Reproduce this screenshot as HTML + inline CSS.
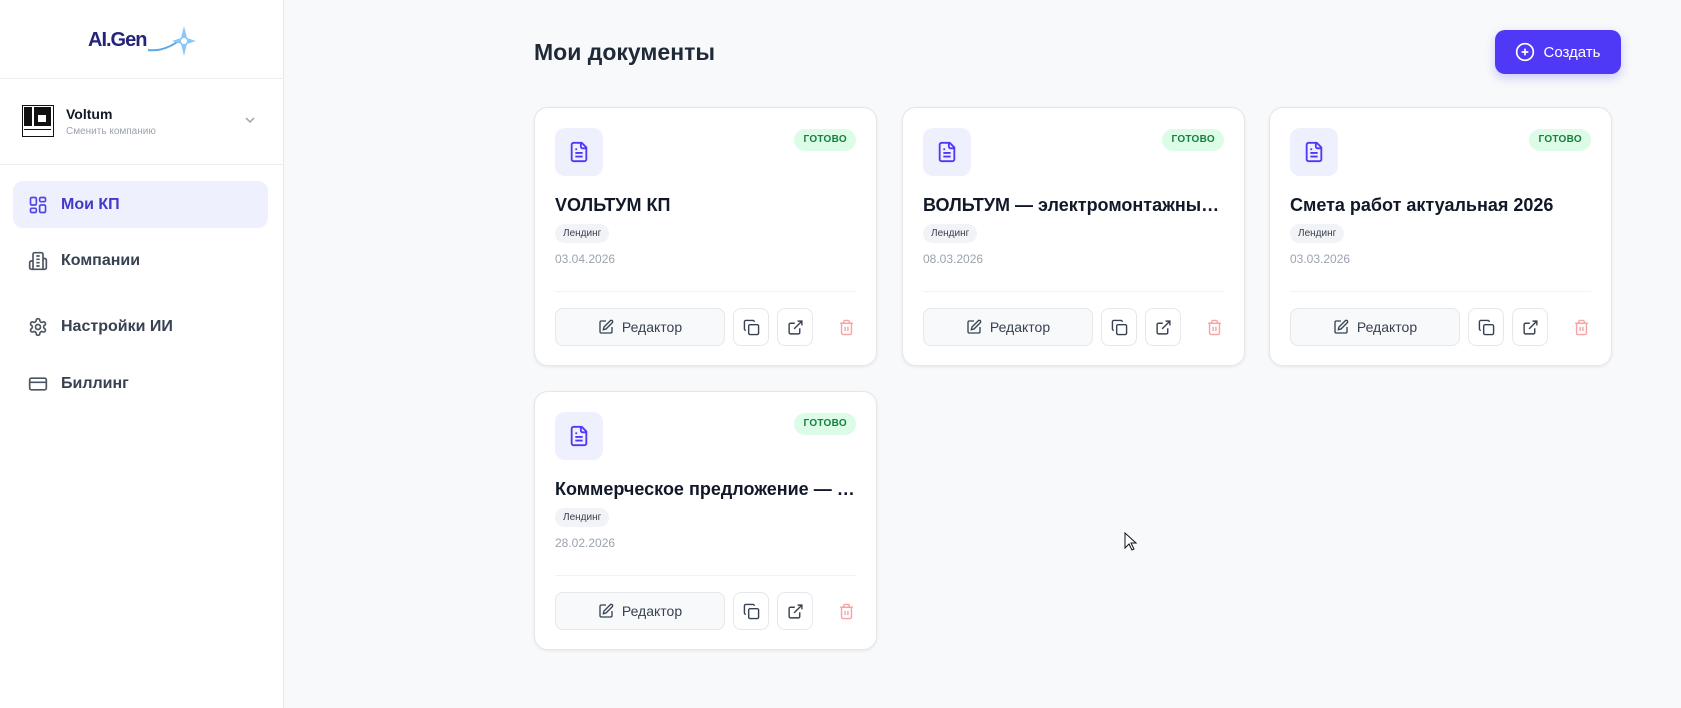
<!DOCTYPE html>
<html><head><meta charset="utf-8"><style>
*{box-sizing:border-box;margin:0;padding:0}
body{width:1681px;height:708px;overflow:hidden;background:#f8f9fb;font-family:"Liberation Sans","DejaVu Sans",sans-serif;color:#111827;position:relative}
.side{position:absolute;left:0;top:0;width:284px;height:708px;background:#fff;border-right:1px solid #e5e7eb}
.hr{position:absolute;left:0;width:284px;height:1px;background:#eceef1}
.nav{position:absolute;left:13px;width:255px;height:47px;border-radius:10px;display:flex;align-items:center;padding-left:15px;font-size:16px;font-weight:bold;color:#374151}
.nav svg{width:20px;height:20px;margin-right:13px}
.card{position:absolute;width:343px;height:259px;background:#fff;border:1px solid #e5e7eb;border-radius:14px;box-shadow:0 1px 3px rgba(0,0,0,.08)}
.ic{position:absolute;left:20px;top:20px;width:48px;height:48px;border-radius:10px;background:#eef0fd;display:flex;align-items:center;justify-content:center}
.badge{position:absolute;right:20px;top:21px;height:22px;padding:0 9px;border-radius:11px;background:#dcfce7;color:#15803d;font-size:10px;font-weight:bold;line-height:22px;letter-spacing:.3px}
.title{position:absolute;left:20px;top:87px;width:305px;font-size:18px;font-weight:bold;white-space:nowrap;overflow:hidden;text-overflow:ellipsis;color:#111827}
.tag{position:absolute;left:20px;top:116px;height:19px;padding:0 8px;border-radius:10px;background:#f1f3f6;font-size:10px;color:#374151;line-height:19px}
.date{position:absolute;left:20px;top:144px;font-size:12px;color:#9ca3af}
.div{position:absolute;left:20px;right:20px;top:183px;height:1px;background:#f1f2f4}
.ed{position:absolute;left:20px;top:200px;width:170px;height:38px;border:1px solid #e5e7eb;border-radius:8px;background:#f8f9fb;display:flex;align-items:center;justify-content:center;font-size:14px;color:#374151}
.ed svg{margin-right:8px}
.sq{position:absolute;top:200px;width:36px;height:38px;border:1px solid #e5e7eb;border-radius:8px;background:#fff;display:flex;align-items:center;justify-content:center}
.tr{position:absolute;top:200px;left:293px;width:36px;height:38px;display:flex;align-items:center;justify-content:center}
</style></head><body>
<div class="side">
 <div style="position:absolute;left:88px;top:29px;font-size:20px;font-weight:bold;color:#24257a;letter-spacing:-1px">AI.Gen</div>
 <svg style="position:absolute;left:140px;top:24px" width="56" height="34" viewBox="0 0 56 34"><path d="M8 26 Q24 28 40 16" stroke="#5aa8e8" stroke-width="2" fill="none"/><path d="M44 2 L47 14 L56 17 L47 20 L44 32 L41 20 L32 17 L41 14 Z" fill="#8cc8f5"/><circle cx="44" cy="17" r="3" fill="#fff"/></svg>
 <div class="hr" style="top:78px"></div>
 <div style="position:absolute;left:22px;top:105px;width:32px;height:32px;border:1.5px solid #111;background:#fff"><div style="position:absolute;left:1px;top:1px;width:8px;height:19px;background:#111"></div><div style="position:absolute;left:11px;top:1px;width:17px;height:19px;background:#111"></div><div style="position:absolute;left:15px;top:9px;width:8px;height:7px;background:#fff"></div><div style="position:absolute;left:1px;top:23px;width:27px;height:1px;background:#111"></div></div>
 <div style="position:absolute;left:66px;top:106px;font-size:14px;font-weight:bold">Voltum</div>
 <div style="position:absolute;left:66px;top:126px;font-size:10px;color:#9ca3af">Сменить компанию</div>
 <svg style="position:absolute;left:244px;top:116px" width="12" height="8" viewBox="0 0 12 8"><path d="M2 2l4 4 4-4" stroke="#9ca3af" stroke-width="1.5" fill="none"/></svg>
 <div class="hr" style="top:164px"></div>
 <div class="nav" style="top:181px;background:#eef0fd;color:#4338ca"><svg viewBox="0 0 24 24" fill="none" stroke="#4f46e5" stroke-width="2"><rect x="3" y="3" width="7" height="9" rx="1.5"/><rect x="14" y="3" width="7" height="5" rx="1.5"/><rect x="14" y="12" width="7" height="9" rx="1.5"/><rect x="3" y="16" width="7" height="5" rx="1.5"/></svg>Мои КП</div>
 <div class="nav" style="top:237px"><svg viewBox="0 0 24 24" fill="none" stroke="#4b5563" stroke-width="2"><path d="M6 22V4a2 2 0 0 1 2-2h8a2 2 0 0 1 2 2v18Z"/><path d="M6 12H4a2 2 0 0 0-2 2v6a2 2 0 0 0 2 2h2M18 9h2a2 2 0 0 1 2 2v9a2 2 0 0 1-2 2h-2M10 6h4M10 10h4M10 14h4M10 18h4"/></svg>Компании</div>
 <div class="nav" style="top:303px"><svg viewBox="0 0 24 24" fill="none" stroke="#4b5563" stroke-width="2"><path d="M12.2 2h-.4a2 2 0 0 0-2 2v.2a2 2 0 0 1-1 1.7l-.4.3a2 2 0 0 1-2 0l-.2-.1a2 2 0 0 0-2.7.7l-.2.4a2 2 0 0 0 .7 2.7l.2.1a2 2 0 0 1 1 1.7v.5a2 2 0 0 1-1 1.7l-.2.1a2 2 0 0 0-.7 2.7l.2.4a2 2 0 0 0 2.7.7l.2-.1a2 2 0 0 1 2 0l.4.3a2 2 0 0 1 1 1.7v.2a2 2 0 0 0 2 2h.4a2 2 0 0 0 2-2v-.2a2 2 0 0 1 1-1.7l.4-.3a2 2 0 0 1 2 0l.2.1a2 2 0 0 0 2.7-.7l.2-.4a2 2 0 0 0-.7-2.7l-.2-.1a2 2 0 0 1-1-1.7v-.5a2 2 0 0 1 1-1.7l.2-.1a2 2 0 0 0 .7-2.7l-.2-.4a2 2 0 0 0-2.7-.7l-.2.1a2 2 0 0 1-2 0l-.4-.3a2 2 0 0 1-1-1.7V4a2 2 0 0 0-2-2z"/><circle cx="12" cy="12" r="3"/></svg>Настройки ИИ</div>
 <div class="nav" style="top:360px"><svg viewBox="0 0 24 24" fill="none" stroke="#4b5563" stroke-width="2"><rect x="2" y="5" width="20" height="14" rx="2"/><path d="M2 10h20"/></svg>Биллинг</div>
</div>
<div style="position:absolute;left:534px;top:39px;font-size:23px;font-weight:bold;color:#1f2937">Мои документы</div>
<div style="position:absolute;left:1495px;top:30px;width:126px;height:44px;border-radius:10px;background:#4f39f6;box-shadow:0 4px 10px rgba(79,57,246,.25);color:#fff;font-size:15px;display:flex;align-items:center;justify-content:center"><svg width="20" height="20" viewBox="0 0 24 24" fill="none" stroke="#fff" stroke-width="2" style="margin-right:8px"><circle cx="12" cy="12" r="10"/><path d="M8 12h8M12 8v8"/></svg>Создать</div>

<div class="card" style="left:534px;top:107px"></div>
<div class="card" style="left:902px;top:107px"></div>
<div class="card" style="left:1269px;top:107px"></div>
<div class="card" style="left:534px;top:391px"></div>
<script>
var t=["VОЛЬТУМ КП","ВОЛЬТУМ — электромонтажные работы","Смета работ актуальная 2026","Коммерческое предложение — Voltum"];
var d=["03.04.2026","08.03.2026","03.03.2026","28.02.2026"];
var cs=document.querySelectorAll('.card');
cs.forEach(function(c,i){c.innerHTML='<div class="ic"><svg width="22" height="22" viewBox="0 0 24 24" fill="none" stroke="#4f39f6" stroke-width="2" stroke-linejoin="round"><path d="M15 2H6a2 2 0 0 0-2 2v16a2 2 0 0 0 2 2h12a2 2 0 0 0 2-2V7Z"/><path d="M14 2v4a2 2 0 0 0 2 2h4M10 9H8M16 13H8M16 17H8"/></svg></div><div class="badge">ГОТОВО</div><div class="title">'+t[i]+'</div><div class="tag">Лендинг</div><div class="date">'+d[i]+'</div><div class="div"></div><div class="ed"><svg width="16" height="16" viewBox="0 0 24 24" fill="none" stroke="#374151" stroke-width="2"><path d="M12 3H5a2 2 0 0 0-2 2v14a2 2 0 0 0 2 2h14a2 2 0 0 0 2-2v-7"/><path d="M18.4 2.6a2.1 2.1 0 0 1 3 3L12 15l-4 1 1-4Z"/></svg>Редактор</div><div class="sq" style="left:198px"><svg width="17" height="17" viewBox="0 0 24 24" fill="none" stroke="#374151" stroke-width="2"><rect x="8" y="8" width="14" height="14" rx="2"/><path d="M4 16c-1.1 0-2-.9-2-2V4c0-1.1.9-2 2-2h10c1.1 0 2 .9 2 2"/></svg></div><div class="sq" style="left:242px"><svg width="17" height="17" viewBox="0 0 24 24" fill="none" stroke="#374151" stroke-width="2"><path d="M15 3h6v6M10 14 21 3M18 13v6a2 2 0 0 1-2 2H5a2 2 0 0 1-2-2V8a2 2 0 0 1 2-2h6"/></svg></div><div class="tr"><svg width="17" height="17" viewBox="0 0 24 24" fill="none" stroke="#f5a3a3" stroke-width="2"><path d="M3 6h18M19 6v14c0 1-1 2-2 2H7c-1 0-2-1-2-2V6M8 6V4c0-1 1-2 2-2h4c1 0 2 1 2 2v2M10 11v6M14 11v6"/></svg></div>';});
</script>
<svg style="position:absolute;left:1124px;top:532px" width="14" height="20" viewBox="0 0 14 20"><path d="M1 1v15l4-4 3 6 2-1-3-6h5Z" fill="#fff" stroke="#111" stroke-width="1"/></svg>
</body></html>
